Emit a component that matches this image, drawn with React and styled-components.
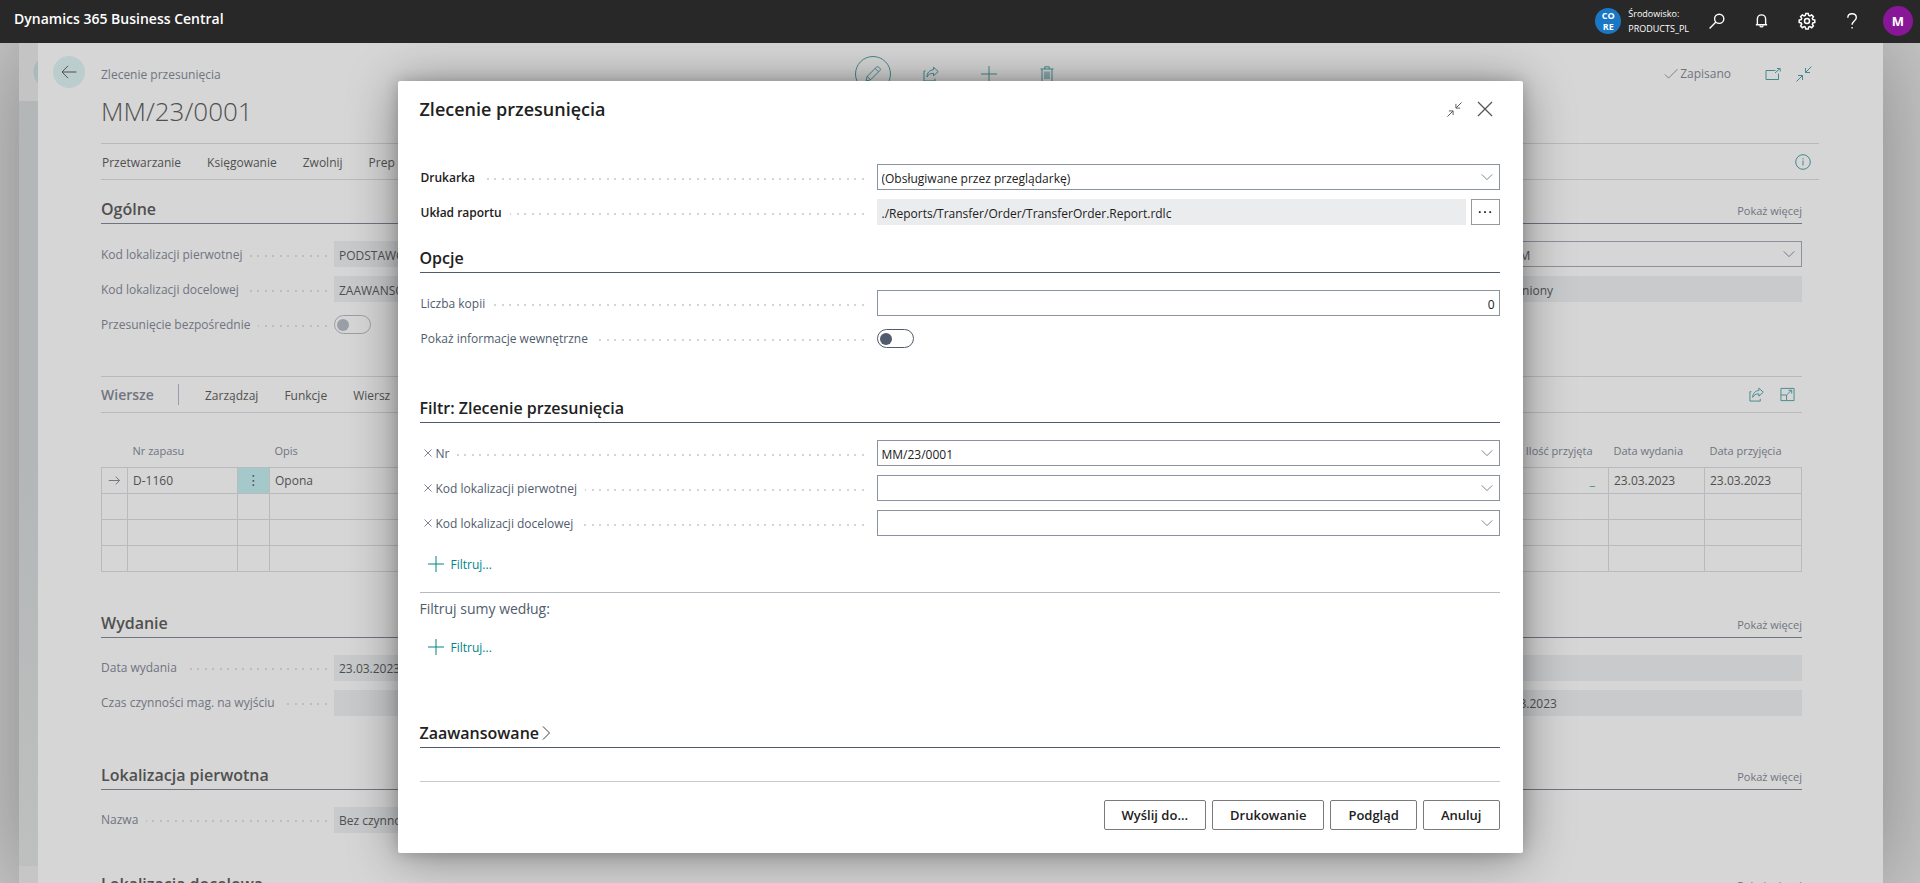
import React, { useState } from "react";
import styled, { createGlobalStyle, css } from "styled-components";

const COLOR = {
  BAR: "#282828",
  PAGE: "#d6d6d6",
  PAGE_TEXT: "#505050",
  PAGE_LABEL: "#6f7480",
  PAGE_LINE: "#b9babd",
  PAGE_FIELD: "#c8cacc",
  PAGE_TEAL: "#42898d",
  PAGE_DOT: "#bdbdc0",
  TEXT: "#212121",
  LABEL: "#505c6d",
  LINE: "#505c6d",
  BORDER: "#8b93a0",
  TEAL: "#008489",
  DOT: "#d4d5d8",
};

const SIZE = { XXS: "9px", XS: "11px", S: "12px", M: "13px", L: "14px", XL: "16px", XXL: "18px" };

const SHAPES = {
  back: <path d="M15.5 8H1M7 1.8 1 8l6 6.2" />,
  arrow: <path d="M1 8h13M9.5 3.2 14.2 8l-4.7 4.8" />,
  search: (
    <>
      <circle cx="10.2" cy="5.8" r="4.6" />
      <path d="M6.9 9.1.6 15.4" />
    </>
  ),
  bell: (
    <>
      <path d="M3.6 12.6V6.4a4.4 4.4 0 0 1 8.8 0v6.2M2 12.6h12" />
      <path d="M6.4 13.2a1.6 1.6 0 0 0 3.2 0" />
    </>
  ),
  gear: (
    <>
      <path d="M6.8.8h2.4l.5 2 1.2.5 1.8-1.1 1.7 1.7-1.1 1.8.5 1.2 2 .5v2.4l-2 .5-.5 1.2 1.1 1.8-1.7 1.7-1.8-1.1-1.2.5-.5 2H6.8l-.5-2-1.2-.5-1.8 1.1-1.7-1.7 1.1-1.8-.5-1.2-2-.5V7.4l2-.5.5-1.2-1.1-1.8 1.7-1.7 1.8 1.1 1.2-.5z" transform="translate(0 -.3)" />
      <circle cx="8" cy="8" r="2.5" />
    </>
  ),
  help: <path d="M3.8 4.8C3.8 2.3 5.5.8 8 .8s4.3 1.5 4.3 3.8c0 3.4-4.2 3.5-4.2 7.2M8.1 14v1.6" />,
  pencil: <path d="m1 15 1.2-4.6L11.4 1.2c.7-.7 1.7-.7 2.4 0l1 1c.7.7.7 1.7 0 2.4L5.6 13.8zM2.2 10.4l3.4 3.4M10.2 2.4l3.4 3.4" />,
  share: <path d="M1 5v10h11v-2.5M1 5h1.5M10.5 1.2 15.2 5.5l-4.7 4.3V7.3c-3.5 0-5.3 1.3-6.5 3.7 0-4.3 2.5-6.8 6.5-7.3z" />,
  plus: <path d="M8 0v16M0 8h16" />,
  trash: <path d="M1.5 3h13M5.8 3V.8h4.4V3M3 3v12.5h10V3M6 5.5v7.5M8 5.5v7.5M10 5.5v7.5" />,
  check: <path d="m1 8.5 4.2 4.2L15.4 2.5" />,
  popout: <path d="M10.5 4.5H1v9h12.5V7.5M10 7l5-4.5M12 2.5h3.2v3" />,
  collapse: <path d="M15.5.5 9.7 6.3M9.5 2v4.5H14M.5 15.5l5.8-5.8M2 9.5h4.5V14" />,
  expand: <path d="M1 1.5h14v13H1zM1 8.5h6v6M7.5 8 12 3.8M9 3.5h3.5V7" />,
  info: (
    <>
      <circle cx="8" cy="8" r="7.3" />
      <path d="M8 6.5v5M8 4.2v1.2" />
    </>
  ),
  close: <path d="m1 1 14 14M15 1 1 15" />,
  down: <path d="m1 4.5 7 7 7-7" />,
  right: <path d="m4.5.5 7.5 7.5-7.5 7.5" />,
  more: <path d="M1 8h2M7 8h2M13 8h2" />,
};

function Icon({ name, size = 16, weight = 1 }) {
  return (
    <StyledIcon
      width={size}
      height={size}
      viewBox="0 0 16 16"
      strokeWidth={weight}
      aria-hidden="true"
    >
      {SHAPES[name]}
    </StyledIcon>
  );
}

function TopBar() {
  return (
    <StyledTopBar>
      <StyledProduct>Dynamics 365 Business Central</StyledProduct>
      <StyledEnvironment>
        <StyledBadge>
          CO
          <br />
          RE
        </StyledBadge>
        <StyledEnvironmentName>
          Środowisko:
          <br />
          PRODUCTS_PL
        </StyledEnvironmentName>
      </StyledEnvironment>
      <StyledBarButton aria-label="Wyszukaj">
        <Icon name="search" weight={1.4} />
      </StyledBarButton>
      <StyledBarButton aria-label="Powiadomienia">
        <Icon name="bell" size={15} weight={1.5} />
      </StyledBarButton>
      <StyledBarButton aria-label="Ustawienia">
        <Icon name="gear" weight={1.5} />
      </StyledBarButton>
      <StyledBarButton aria-label="Pomoc">
        <Icon name="help" weight={1.4} />
      </StyledBarButton>
      <StyledAvatar aria-label="Konto">M</StyledAvatar>
    </StyledTopBar>
  );
}

function PageHeader() {
  return (
    <StyledPageHeader>
      <StyledTitles>
        <StyledCaption>Zlecenie przesunięcia</StyledCaption>
        <StyledPageTitle>MM/23/0001</StyledPageTitle>
      </StyledTitles>
      <StyledPageTools>
        <StyledRoundButton $outlined aria-label="Edytuj">
          <Icon name="pencil" />
        </StyledRoundButton>
        <StyledRoundButton aria-label="Udostępnij">
          <Icon name="share" />
        </StyledRoundButton>
        <StyledRoundButton aria-label="Nowy">
          <Icon name="plus" />
        </StyledRoundButton>
        <StyledRoundButton aria-label="Usuń">
          <Icon name="trash" />
        </StyledRoundButton>
      </StyledPageTools>
      <StyledPageStatus>
        <StyledSaved>
          <Icon name="check" size={14} />
          Zapisano
        </StyledSaved>
        <StyledTealButton aria-label="Otwórz w nowym oknie">
          <Icon name="popout" />
        </StyledTealButton>
        <StyledTealButton aria-label="Zwiń">
          <Icon name="collapse" />
        </StyledTealButton>
      </StyledPageStatus>
    </StyledPageHeader>
  );
}

function PageField({ id, label, value, column, combo }) {
  return (
    <StyledPageField $column={column}>
      <StyledPageLabel>
        <StyledLabel htmlFor={id} $dim>
          {label}
        </StyledLabel>
        <StyledDots $dim />
      </StyledPageLabel>
      <StyledBox $dim $readOnly={!combo}>
        <StyledInput id={id} defaultValue={value} readOnly={!combo} />
        {combo && (
          <StyledChevron type="button" aria-label={`Wybierz: ${label}`}>
            <Icon name="down" size={12} />
          </StyledChevron>
        )}
      </StyledBox>
    </StyledPageField>
  );
}

function PageSection({ title, children, gap }) {
  return (
    <StyledPageSection $gap={gap}>
      <StyledHeading $dim>
        {title}
        <StyledMore type="button">Pokaż więcej</StyledMore>
      </StyledHeading>
      <StyledPageFields>{children}</StyledPageFields>
    </StyledPageSection>
  );
}

function Lines() {
  return (
    <StyledLines>
      <StyledLinesBar>
        <StyledLinesTitle>Wiersze</StyledLinesTitle>
        <StyledMenuButton>Zarządzaj</StyledMenuButton>
        <StyledMenuButton>Funkcje</StyledMenuButton>
        <StyledMenuButton>Wiersz</StyledMenuButton>
        <StyledLinesTools>
          <StyledTealButton aria-label="Udostępnij wiersze">
            <Icon name="share" size={15} />
          </StyledTealButton>
          <StyledTealButton aria-label="Rozwiń wiersze">
            <Icon name="expand" size={15} />
          </StyledTealButton>
        </StyledLinesTools>
      </StyledLinesBar>
      <StyledTable>
        <colgroup>
          <StyledCol $width="26px" />
          <StyledCol $width="110px" />
          <StyledCol $width="32px" />
          <StyledCol />
          <StyledCol $width="110px" />
          <StyledCol $width="96px" />
          <StyledCol $width="97px" />
        </colgroup>
        <thead>
          <tr>
            <th />
            <th>Nr zapasu</th>
            <th />
            <th>Opis</th>
            <StyledNumberHead>Ilość przyjęta</StyledNumberHead>
            <th>Data wydania</th>
            <th>Data przyjęcia</th>
          </tr>
        </thead>
        <tbody>
          <tr>
            <StyledIconCell>
              <Icon name="arrow" size={13} weight={1.2} />
            </StyledIconCell>
            <td>D-1160</td>
            <StyledMenuCell>
              <StyledRowMenu aria-label="Więcej opcji">⋮</StyledRowMenu>
            </StyledMenuCell>
            <td>Opona</td>
            <StyledNumberCell>
              <a href="#przyjeta">_</a>
            </StyledNumberCell>
            <td>23.03.2023</td>
            <td>23.03.2023</td>
          </tr>
          {[1, 2, 3].map((row) => (
            <tr key={row}>
              <td />
              <td />
              <td />
              <td />
              <td />
              <td />
              <td />
            </tr>
          ))}
        </tbody>
      </StyledTable>
    </StyledLines>
  );
}

function TransferOrderPage() {
  return (
    <StyledPage>
      <StyledBackButton aria-label="Wstecz">
        <Icon name="back" />
      </StyledBackButton>
      <StyledPageContent>
        <PageHeader />
        <StyledActionBar>
          <StyledMenuButton>Przetwarzanie</StyledMenuButton>
          <StyledMenuButton>Księgowanie</StyledMenuButton>
          <StyledMenuButton>Zwolnij</StyledMenuButton>
          <StyledMenuButton>Prep</StyledMenuButton>
          <StyledInfoButton aria-label="Informacje">
            <Icon name="info" />
          </StyledInfoButton>
        </StyledActionBar>
        <StyledSections>
          <PageSection title="Ogólne" gap="18px">
            <PageField id="from" label="Kod lokalizacji pierwotnej" value="PODSTAWOWA" column={1} />
            <PageField id="transit" label="Kod tranzytu" value="PROM" column={3} combo />
            <PageField id="to" label="Kod lokalizacji docelowej" value="ZAAWANSOWANA" column={1} />
            <PageField id="status" label="Status" value="Zwolniony" column={3} />
            <StyledPageField $column={1}>
              <StyledPageLabel>
                <StyledLabel htmlFor="direct" $dim>
                  Przesunięcie bezpośrednie
                </StyledLabel>
                <StyledDots $dim />
              </StyledPageLabel>
              <StyledToggle id="direct" type="checkbox" role="switch" $dim />
            </StyledPageField>
          </PageSection>
          <Lines />
          <PageSection title="Wydanie" gap="40px">
            <PageField id="shipDate" label="Data wydania" value="23.03.2023" column={1} />
            <PageField id="shipTime" label="Czas wysyłki" value="" column={3} />
            <PageField id="handling" label="Czas czynności mag. na wyjściu" value="" column={1} />
            <PageField id="receiptDate" label="Data przyjęcia" value="23.03.2023" column={3} />
          </PageSection>
          <PageSection title="Lokalizacja pierwotna" gap="48px">
            <PageField id="name" label="Nazwa" value="Bez czynności mag." column={1} />
          </PageSection>
          <PageSection title="Lokalizacja docelowa" gap="40px" />
        </StyledSections>
      </StyledPageContent>
    </StyledPage>
  );
}

function Row({ id, label, strong, removable, children }) {
  return (
    <StyledRow>
      <StyledRowLabel>
        {removable && (
          <StyledRemove aria-label={`Usuń filtr: ${label}`}>
            <Icon name="close" size={8} weight={1.5} />
          </StyledRemove>
        )}
        <StyledLabel htmlFor={id} $strong={strong}>
          {label}
        </StyledLabel>
        <StyledDots />
      </StyledRowLabel>
      {children}
    </StyledRow>
  );
}

function FilterRow({ id, label, value }) {
  return (
    <Row id={id} label={label} removable>
      <StyledBox>
        <StyledInput id={id} defaultValue={value} />
        <StyledChevron aria-label={`Wybierz: ${label}`}>
          <Icon name="down" size={12} />
        </StyledChevron>
      </StyledBox>
    </Row>
  );
}

function ReportDialog() {
  const [internal, setInternal] = useState(false);

  return (
    <StyledDialog role="dialog" aria-labelledby="dialogTitle">
      <StyledDialogHeader>
        <StyledDialogTitle id="dialogTitle">Zlecenie przesunięcia</StyledDialogTitle>
        <StyledDialogButton aria-label="Zmniejsz">
          <Icon name="collapse" size={15} />
        </StyledDialogButton>
        <StyledDialogButton aria-label="Zamknij">
          <Icon name="close" weight={1.3} />
        </StyledDialogButton>
      </StyledDialogHeader>

      <StyledRows>
        <Row id="printer" label="Drukarka" strong>
          <StyledBox>
            <StyledSelect id="printer">
              <option>(Obsługiwane przez przeglądarkę)</option>
            </StyledSelect>
            <StyledSelectArrow>
              <Icon name="down" size={12} />
            </StyledSelectArrow>
          </StyledBox>
        </Row>
        <Row id="layout" label="Układ raportu" strong>
          <StyledLookup>
            <StyledBox $readOnly>
              <StyledInput
                id="layout"
                readOnly
                defaultValue="./Reports/Transfer/Order/TransferOrder.Report.rdlc"
              />
            </StyledBox>
            <StyledLookupButton aria-label="Wybierz układ">
              <Icon name="more" size={14} weight={2} />
            </StyledLookupButton>
          </StyledLookup>
        </Row>
      </StyledRows>

      <StyledGroup $gap="22px">
        <StyledHeading>Opcje</StyledHeading>
        <StyledRows>
          <Row id="copies" label="Liczba kopii">
            <StyledBox>
              <StyledInput id="copies" defaultValue="0" $right />
            </StyledBox>
          </Row>
          <Row id="internal" label="Pokaż informacje wewnętrzne">
            <StyledToggle
              id="internal"
              type="checkbox"
              role="switch"
              checked={internal}
              onChange={(e) => setInternal(e.target.checked)}
            />
          </Row>
        </StyledRows>
      </StyledGroup>

      <StyledGroup $gap="46px">
        <StyledHeading>Filtr: Zlecenie przesunięcia</StyledHeading>
        <StyledRows>
          <FilterRow id="filterNo" label="Nr" value="MM/23/0001" />
          <FilterRow id="filterFrom" label="Kod lokalizacji pierwotnej" value="" />
          <FilterRow id="filterTo" label="Kod lokalizacji docelowej" value="" />
        </StyledRows>
        <StyledAddFilter>
          <Icon name="plus" />
          Filtruj...
        </StyledAddFilter>
        <StyledTotals>Filtruj sumy według:</StyledTotals>
        <StyledAddFilter>
          <Icon name="plus" />
          Filtruj...
        </StyledAddFilter>
      </StyledGroup>

      <StyledGroup $gap="62px">
        <StyledHeading>
          <StyledAdvanced>
            Zaawansowane
            <Icon name="right" size={14} />
          </StyledAdvanced>
        </StyledHeading>
      </StyledGroup>

      <StyledFooter>
        <StyledFooterButton>Wyślij do...</StyledFooterButton>
        <StyledFooterButton>Drukowanie</StyledFooterButton>
        <StyledFooterButton>Podgląd</StyledFooterButton>
        <StyledFooterButton>Anuluj</StyledFooterButton>
      </StyledFooter>
    </StyledDialog>
  );
}

export default function App() {
  return (
    <StyledApp>
      <GlobalStyle />
      <TopBar />
      <StyledWorkspace>
        <StyledStack>
          <TransferOrderPage />
        </StyledStack>
        <StyledOverlay>
          <ReportDialog />
        </StyledOverlay>
      </StyledWorkspace>
    </StyledApp>
  );
}

const GlobalStyle = createGlobalStyle`
  * {
    box-sizing: border-box;
  }
  body {
    margin: 0;
    overflow: hidden;
    font-family: "Segoe UI", "Open Sans", "Noto Sans", sans-serif;
    font-size: ${SIZE.S};
    color: ${COLOR.TEXT};
  }
  button, input, select {
    font: inherit;
    color: inherit;
    margin: 0;
    padding: 0;
    border: 0;
    background: none;
  }
  h1, h2 {
    margin: 0;
  }
`;

const StyledIcon = styled.svg`
  display: block;
  flex: none;
  overflow: visible;
  fill: none;
  stroke: currentColor;
`;

const StyledApp = styled.div`
  display: flex;
  flex-direction: column;
  height: 100vh;
`;
const StyledTopBar = styled.header`
  display: flex;
  align-items: center;
  height: 43px;
  padding: 0 7px 2px 14px;
  background: ${COLOR.BAR};
  color: #fff;
  flex: none;
`;
const StyledProduct = styled.div`
  flex: 1;
  padding-bottom: 4px;
  font-size: ${SIZE.L};
  font-weight: 600;
`;
const StyledEnvironment = styled.div`
  display: flex;
  align-items: center;
  gap: 7px;
  margin-right: 5px;
`;
const StyledBadge = styled.div`
  width: 26px;
  height: 26px;
  border-radius: 50%;
  background: #1b76c4;
  font-size: ${SIZE.XXS};
  font-weight: 700;
  line-height: 11px;
  padding-top: 2px;
  text-align: center;
`;
const StyledEnvironmentName = styled.div`
  font-size: ${SIZE.XXS};
  line-height: 15px;
`;
const StyledBarButton = styled.button`
  display: flex;
  align-items: center;
  justify-content: center;
  width: 45px;
  height: 40px;
`;
const StyledAvatar = styled.button`
  width: 30px;
  height: 30px;
  margin-left: 9px;
  border-radius: 50%;
  background: #881798;
  font-size: ${SIZE.M};
  font-weight: 700;
`;

const StyledWorkspace = styled.div`
  position: relative;
  flex: 1;
  display: flex;
  min-height: 0;
  padding: 0 37px 0 19px;
  overflow: hidden;
  background: #c6c6c6;
`;
const StyledStack = styled.div`
  flex: 1;
  display: flex;
  min-width: 0;
  padding-left: 19px;
  background:
    radial-gradient(circle at 31px 29px, #a9baba 16px, transparent 17px),
    linear-gradient(#c4c4c4 58px, #b4b7b7 58px, #b4b7b7 50%, #bec0c0 823px, #c6c6c6 823px);
  box-shadow: 0 0 90px rgba(0, 0, 0, 0.32);
`;
const StyledPage = styled.main`
  flex: 1;
  display: flex;
  align-items: flex-start;
  min-width: 0;
  gap: 16px;
  padding: 0 64px 0 15px;
  overflow: hidden;
  background: ${COLOR.PAGE};
  color: ${COLOR.PAGE_TEXT};
`;
const StyledBackButton = styled.button`
  display: flex;
  align-items: center;
  justify-content: center;
  width: 32px;
  height: 32px;
  margin-top: 13px;
  border-radius: 50%;
  background: #bccdcd;
`;
const StyledPageContent = styled.div`
  flex: 1;
  min-width: 0;
`;
const StyledPageHeader = styled.div`
  display: grid;
  grid-template-columns: 1fr auto 1fr;
  align-items: start;
  height: 100px;
`;
const StyledTitles = styled.div`
  padding-top: 22px;
`;
const StyledCaption = styled.div`
  color: ${COLOR.PAGE_LABEL};
  line-height: 20px;
`;
const StyledPageTitle = styled.h1`
  margin-top: 8px;
  font-size: 26px;
  font-weight: 300;
  line-height: 36px;
`;
const StyledPageTools = styled.div`
  display: flex;
  gap: 22px;
  padding-top: 13px;
`;
const StyledRoundButton = styled.button`
  display: flex;
  align-items: center;
  justify-content: center;
  width: 36px;
  height: 36px;
  border: 1px solid ${({ $outlined }) => ($outlined ? COLOR.PAGE_TEAL : "transparent")};
  border-radius: 50%;
  color: ${COLOR.PAGE_TEAL};
`;
const StyledPageStatus = styled.div`
  display: flex;
  justify-content: flex-end;
  align-items: center;
  gap: 15px;
  padding: 21px 7px 0 0;
  line-height: 20px;
`;
const StyledSaved = styled.div`
  display: flex;
  align-items: center;
  gap: 2px;
  margin-right: 19px;
  color: ${COLOR.PAGE_LABEL};
`;
const StyledTealButton = styled.button`
  color: ${COLOR.PAGE_TEAL};
`;
const StyledActionBar = styled.div`
  display: flex;
  align-items: center;
  gap: 26px;
  height: 37px;
  padding-left: 1px;
  border-top: 1px solid ${COLOR.PAGE_LINE};
  border-bottom: 1px solid ${COLOR.PAGE_LINE};
`;
const StyledMenuButton = styled.button`
  padding-top: 1px;
`;
const StyledInfoButton = styled(StyledTealButton)`
  margin: 0 8px 0 auto;
`;
const StyledSections = styled.div`
  padding-right: 17px;
`;
const StyledPageSection = styled.section`
  margin-top: ${({ $gap }) => $gap};
`;
const StyledHeading = styled.h2`
  display: flex;
  align-items: center;
  justify-content: space-between;
  height: 26px;
  margin-bottom: 17px;
  padding-bottom: 3px;
  border-bottom: 1px solid ${({ $dim }) => ($dim ? COLOR.PAGE_LABEL : COLOR.LINE)};
  font-size: ${SIZE.XL};
  font-weight: 600;
  line-height: 20px;
`;
const StyledMore = styled.button`
  padding-top: 4px;
  font-size: ${SIZE.XS};
  font-weight: 400;
  color: ${COLOR.PAGE_LABEL};
`;
const StyledPageFields = styled.div`
  display: grid;
  grid-template-columns: repeat(3, minmax(0, 1fr));
  gap: 9px 34px;
`;
const StyledPageField = styled.div`
  grid-column: ${({ $column }) => $column};
  display: flex;
  align-items: center;
  height: 26px;
`;
const StyledPageLabel = styled.div`
  display: flex;
  align-items: center;
  width: 233px;
  flex: none;
`;
const StyledLabel = styled.label`
  white-space: nowrap;
  color: ${COLOR.LABEL};
  ${({ $dim }) => $dim && css`color: ${COLOR.PAGE_LABEL};`}
  ${({ $strong }) =>
    $strong &&
    css`
      color: ${COLOR.TEXT};
      font-weight: 600;
    `}
`;
// two dots per 15px tile
const StyledDots = styled.span`
  flex: 1;
  height: 2px;
  margin: 3px 13px 0 8px;
  background: repeating-linear-gradient(
    to left,
    ${({ $dim }) => ($dim ? COLOR.PAGE_DOT : COLOR.DOT)} 0 2px,
    transparent 2px 8px,
    ${({ $dim }) => ($dim ? COLOR.PAGE_DOT : COLOR.DOT)} 8px 10px,
    transparent 10px 15px
  );
  ${({ $dim }) => $dim && css`margin-right: 7px;`}
`;
const StyledBox = styled.div`
  position: relative;
  flex: 1;
  display: flex;
  align-items: center;
  min-width: 0;
  height: 26px;
  border: 1px solid ${({ $dim }) => ($dim ? "#8d919b" : COLOR.BORDER)};
  ${({ $readOnly, $dim }) =>
    $readOnly &&
    css`
      border-color: transparent;
      background: ${$dim ? COLOR.PAGE_FIELD : "#ebecee"} border-box;
    `}
`;
const StyledInput = styled.input`
  flex: 1;
  min-width: 0;
  height: 24px;
  padding: 2px 4px 0;
  outline: none;
  text-align: ${({ $right }) => ($right ? "right" : "left")};
`;
const StyledSelect = styled.select`
  flex: 1;
  height: 24px;
  padding: 2px 30px 0 4px;
  appearance: none;
  outline: none;
`;
const StyledSelectArrow = styled.span`
  position: absolute;
  right: 6px;
  color: ${COLOR.LABEL};
  pointer-events: none;
`;
const StyledChevron = styled.button`
  padding: 0 6px;
  color: ${COLOR.LABEL};
`;
const StyledToggle = styled.input`
  appearance: none;
  width: 37px;
  height: 19px;
  padding: 3px 2px;
  border: 1px solid ${({ $dim }) => ($dim ? "#9a9ea6" : COLOR.LINE)};
  border-radius: 10px;

  &::before {
    content: "";
    display: block;
    width: 12px;
    height: 12px;
    border-radius: 50%;
    background: ${({ $dim }) => ($dim ? "#9a9ea6" : COLOR.LINE)};
  }
  &:checked::before {
    margin-left: auto;
  }
`;

const StyledLines = styled.section`
  margin-top: 39px;
`;
const StyledLinesBar = styled.div`
  display: flex;
  align-items: center;
  gap: 26px;
  height: 37px;
  border-top: 1px solid ${COLOR.PAGE_LINE};
  border-bottom: 1px solid ${COLOR.PAGE_LINE};
`;
const StyledLinesTitle = styled.h2`
  width: 78px;
  border-right: 1px solid #9a9ea6;
  color: ${COLOR.PAGE_LABEL};
  font-size: ${SIZE.L};
  font-weight: 600;
  line-height: 21px;
`;
const StyledLinesTools = styled.div`
  display: flex;
  gap: 16px;
  margin-left: auto;
  padding-right: 7px;
`;
const StyledTable = styled.table`
  width: 100%;
  table-layout: fixed;
  border-collapse: collapse;

  th {
    height: 54px;
    padding: 22px 5px 0;
    color: ${COLOR.PAGE_LABEL};
    font-size: ${SIZE.XS};
    font-weight: 400;
    text-align: left;
    white-space: nowrap;
  }
  td {
    height: 26px;
    padding: 2px 5px 0;
    border: 1px solid ${COLOR.PAGE_LINE};
    line-height: 20px;
  }
`;
const StyledCol = styled.col`
  width: ${({ $width }) => $width || "auto"};
`;
const StyledNumberHead = styled.th`
  && {
    padding-right: 16px;
    text-align: right;
  }
`;
const StyledNumberCell = styled.td`
  && {
    padding-right: 13px;
    text-align: right;
  }
  a {
    color: ${COLOR.PAGE_TEAL};
    text-decoration: none;
  }
`;
const StyledIconCell = styled.td`
  && {
    padding: 0 6px;
    color: ${COLOR.PAGE_LABEL};
  }
`;
const StyledMenuCell = styled.td`
  && {
    padding: 0;
    background: #a5c8ca;
    text-align: center;
  }
`;
const StyledRowMenu = styled.button`
  font-family: "DejaVu Sans", sans-serif;
  font-size: ${SIZE.L};
  line-height: 20px;
`;

const StyledOverlay = styled.div`
  position: absolute;
  inset: 0;
  display: flex;
  align-items: flex-start;
  justify-content: center;
  padding-top: 38px;
`;
const StyledDialog = styled.section`
  width: 90%;
  max-width: 1125px;
  padding: 0 23px 23px 22px;
  border-radius: 2px;
  background: #fff;
  box-shadow: 0 0 14px rgba(0, 0, 0, 0.18), 0 4px 50px rgba(0, 0, 0, 0.4);
`;
const StyledDialogHeader = styled.div`
  display: flex;
  align-items: center;
  gap: 15px;
  height: 56px;
  margin-bottom: 27px;
  padding-right: 7px;
`;
const StyledDialogTitle = styled.h1`
  flex: 1;
  font-size: ${SIZE.XXL};
  font-weight: 600;
`;
const StyledDialogButton = styled.button`
  color: #555;
`;
const StyledRows = styled.div`
  display: flex;
  flex-direction: column;
  gap: 9px;
`;
const StyledRow = styled.div`
  display: flex;
  align-items: center;
  height: 26px;
`;
const StyledRowLabel = styled.div`
  display: flex;
  align-items: center;
  width: 457px;
  padding-left: 1px;
`;
const StyledRemove = styled.button`
  padding: 0 4px 0 3px;
  color: ${COLOR.LABEL};
`;
const StyledLookup = styled.div`
  display: flex;
  flex: 1;
  gap: 5px;
`;
const StyledLookupButton = styled.button`
  display: flex;
  align-items: center;
  justify-content: center;
  width: 29px;
  height: 26px;
  border: 1px solid #999;
`;
const StyledGroup = styled.section`
  margin-top: ${({ $gap }) => $gap};
`;
const StyledAddFilter = styled.button`
  display: flex;
  align-items: center;
  gap: 7px;
  height: 26px;
  margin: 15px 0 15px 8px;
  color: ${COLOR.TEAL};
  font-weight: 500;
`;
const StyledTotals = styled.div`
  padding-top: 6px;
  border-top: 1px solid #b5bac3;
  color: ${COLOR.LABEL};
  font-size: ${SIZE.L};
  line-height: 20px;
`;
const StyledAdvanced = styled.button`
  display: flex;
  align-items: center;
`;
const StyledFooter = styled.footer`
  display: flex;
  justify-content: flex-end;
  gap: 6px;
  margin-top: 33px;
  padding-top: 18px;
  border-top: 1px solid #c8c8c8;
`;
const StyledFooterButton = styled.button`
  height: 30px;
  padding: 0 17px;
  border: 1px solid #7a7a7a;
  border-radius: 2px;
  font-size: ${SIZE.M};
  font-weight: 600;
`;
